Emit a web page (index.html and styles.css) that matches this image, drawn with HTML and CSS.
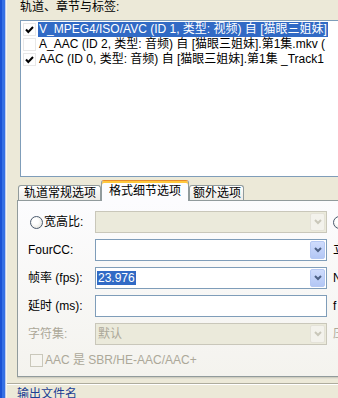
FILE: index.html
```html
<!DOCTYPE html>
<html lang="zh-CN">
<head>
	<meta charset="UTF-8">
	<title>mmg</title>
<link rel="stylesheet" href="styles.css">
</head>
<body>
<div class="frame">
	<div class="edge"></div>
	<div class="win">
		<div class="caption">轨道、章节与标签:</div>
		<div class="tracks">
			<div class="track">
				<span class="chk"><svg width="9" height="8" viewBox="0 0 9 8"><path d="M1 3.5 L3.3 6 L8 1" fill="none" stroke="#000" stroke-width="2"/></svg></span>
				<span class="name sel">V_MPEG4/ISO/AVC (ID 1, 类型: 视频) 自 [猫眼三姐妹]</span>
			</div>
			<div class="track">
				<span class="chk"></span>
				<span class="name">A_AAC (ID 2, 类型: 音频) 自 [猫眼三姐妹].第1集.mkv (</span>
			</div>
			<div class="track">
				<span class="chk"><svg width="9" height="8" viewBox="0 0 9 8"><path d="M1 3.5 L3.3 6 L8 1" fill="none" stroke="#000" stroke-width="2"/></svg></span>
				<span class="name">AAC (ID 0, 类型: 音频) 自 [猫眼三姐妹].第1集 _Track1</span>
			</div>
		</div>
		<div class="tabs">
			<div class="tab first">轨道常规选项</div>
			<div class="tab active">格式细节选项</div>
			<div class="tab last">额外选项</div>
		</div>
		<div class="panel">
			<div class="row">
				<label class="lbl"><span class="radio"></span>宽高比:</label>
				<div class="combo off"><span class="val"></span><span class="btn"><svg width="8" height="6" viewBox="0 0 8 6"><path d="M1 1 L4 4 L7 1" fill="none" stroke-width="2"/></svg></span></div>
				<span class="side"><span class="radio"></span></span>
			</div>
			<div class="row">
				<label class="lbl">FourCC:</label>
				<div class="combo"><span class="val"></span><span class="btn"><svg width="8" height="6" viewBox="0 0 8 6"><path d="M1 1 L4 4 L7 1" fill="none" stroke-width="2"/></svg></span></div>
				<span class="side">立</span>
			</div>
			<div class="row">
				<label class="lbl">帧率 (fps):</label>
				<div class="combo"><span class="val sel">23.976</span><span class="btn"><svg width="8" height="6" viewBox="0 0 8 6"><path d="M1 1 L4 4 L7 1" fill="none" stroke-width="2"/></svg></span></div>
				<span class="side">N</span>
			</div>
			<div class="row">
				<label class="lbl">延时 (ms):</label>
				<div class="edit"></div>
				<span class="side">f</span>
			</div>
			<div class="row">
				<label class="lbl gray">字符集:</label>
				<div class="combo off"><span class="val gray">默认</span><span class="btn"><svg width="8" height="6" viewBox="0 0 8 6"><path d="M1 1 L4 4 L7 1" fill="none" stroke-width="2"/></svg></span></div>
				<span class="side gray">压</span>
			</div>
			<div class="row check">
				<span class="box"></span><span class="gray">AAC 是 SBR/HE-AAC/AAC+</span>
			</div>
		</div>
		<div class="group">输出文件名</div>
	</div>
</div>
</body>
</html>
```

FILE: styles.css
```css
*{padding: 0;margin: 0;box-sizing: border-box;}
body{
	width: 338px;height: 398px;overflow: hidden;background: #ece9d8;
	font: 12px/15px "Liberation Sans","Noto Sans CJK SC",sans-serif;color: #000;
}
.frame{display: flex;height: 398px;}
.edge{
	width: 7px;flex: none;
	background: linear-gradient(to right,#1a52d4 0,#1a52d4 2px,#3570e4 2px,#3570e4 5px,#bccbee 5px,#bccbee 6px,#f5f4ee 6px);
}
.win{width: 420px;flex: none;}
.caption{margin-left: 13px;height: 17px;line-height: 15px;margin-bottom: 3px;}

.tracks{
	margin-left: 13px;height: 157px;border: 1px solid #7f9db9;background: #fff;padding: 1px 0;overflow: hidden;
}
.track{display: flex;align-items: center;height: 15px;padding-left: 2px;white-space: nowrap;}
.chk{
	width: 13px;height: 13px;flex: none;margin-right: 2px;border: 1px solid #e8e8e8;
	display: flex;align-items: center;justify-content: center;
}
.name{padding: 0 1px;line-height: 15px;}
.sel{background: #316ac5;color: #fff;}

.tabs{display: flex;align-items: flex-end;height: 20px;margin: 3px 0 0 11px;}
.tab{
	height: 15px;line-height: 14px;border: 1px solid #919b9c;border-bottom: none;border-radius: 3px 3px 0 0;
	background: linear-gradient(#fff,#ecebe6);white-space: nowrap;
}
.first{padding: 0 4px 0 5px;}
.last{padding: 0 2px 0 3px;}
.active{
	height: 21px;margin-bottom: -1px;padding: 3px 7px 0;line-height: 15px;position: relative;z-index: 1;
	background: #fcfcfe;border-color: #919b9c;border-top: 1px solid #e68b2c;box-shadow: inset 0 2px #ffc83c;
}

.panel{
	margin-left: 10px;height: 177px;border: 1px solid #919b9c;padding: 10px 0 0 10px;
	background: linear-gradient(#fcfcfe,#f4f3ee);
	display: flex;flex-direction: column;gap: 6px;
	box-shadow: 0 1px #d0cebf,0 2px #e2e0d4;
}
.row{display: flex;align-items: center;height: 22px;white-space: nowrap;}
.lbl{width: 67px;flex: none;display: flex;align-items: center;}
.radio{
	width: 13px;height: 13px;flex: none;border: 1px solid #4a5a6e;border-radius: 50%;margin: 0 1px 0 2px;
	background: radial-gradient(circle at 40% 40%,#fff 30%,#dcdad0);
}
.combo,.edit{
	width: 232px;height: 22px;flex: none;border: 1px solid #7f9db9;background: #fff;
	display: flex;align-items: center;justify-content: space-between;padding: 0 1px;
}
.val{line-height: 14px;padding: 0 1px;}
.btn{
	width: 15px;height: 18px;border: 1px solid #b5c8f3;border-radius: 2px;
	background: linear-gradient(#cfdcfc,#b3c7f5);
	display: flex;align-items: center;justify-content: center;
}
.btn path{stroke: #4d6185;}
.off{border-color: #c9c7ba;background: #ebeadb;}
.off .btn{background: #f3f2ec;border-color: #e4e2d8;}
.off .btn path{stroke: #c9c7ba;}
.gray{color: #aca899;}
.side{margin-left: 6px;display: flex;align-items: center;}
.side .radio{margin: 0;}

.check{height: 18px;padding-left: 2px;}
.box{width: 13px;height: 13px;flex: none;border: 1px solid #cac8bb;margin-right: 2px;background: #f6f5f0;}

.group{
	margin-top: 6px;border-top: 1px solid #aeac9d;box-shadow: inset 0 1px #fff;
	padding: 3px 0 0 10px;line-height: 15px;color: #1c3e94;
}
```
